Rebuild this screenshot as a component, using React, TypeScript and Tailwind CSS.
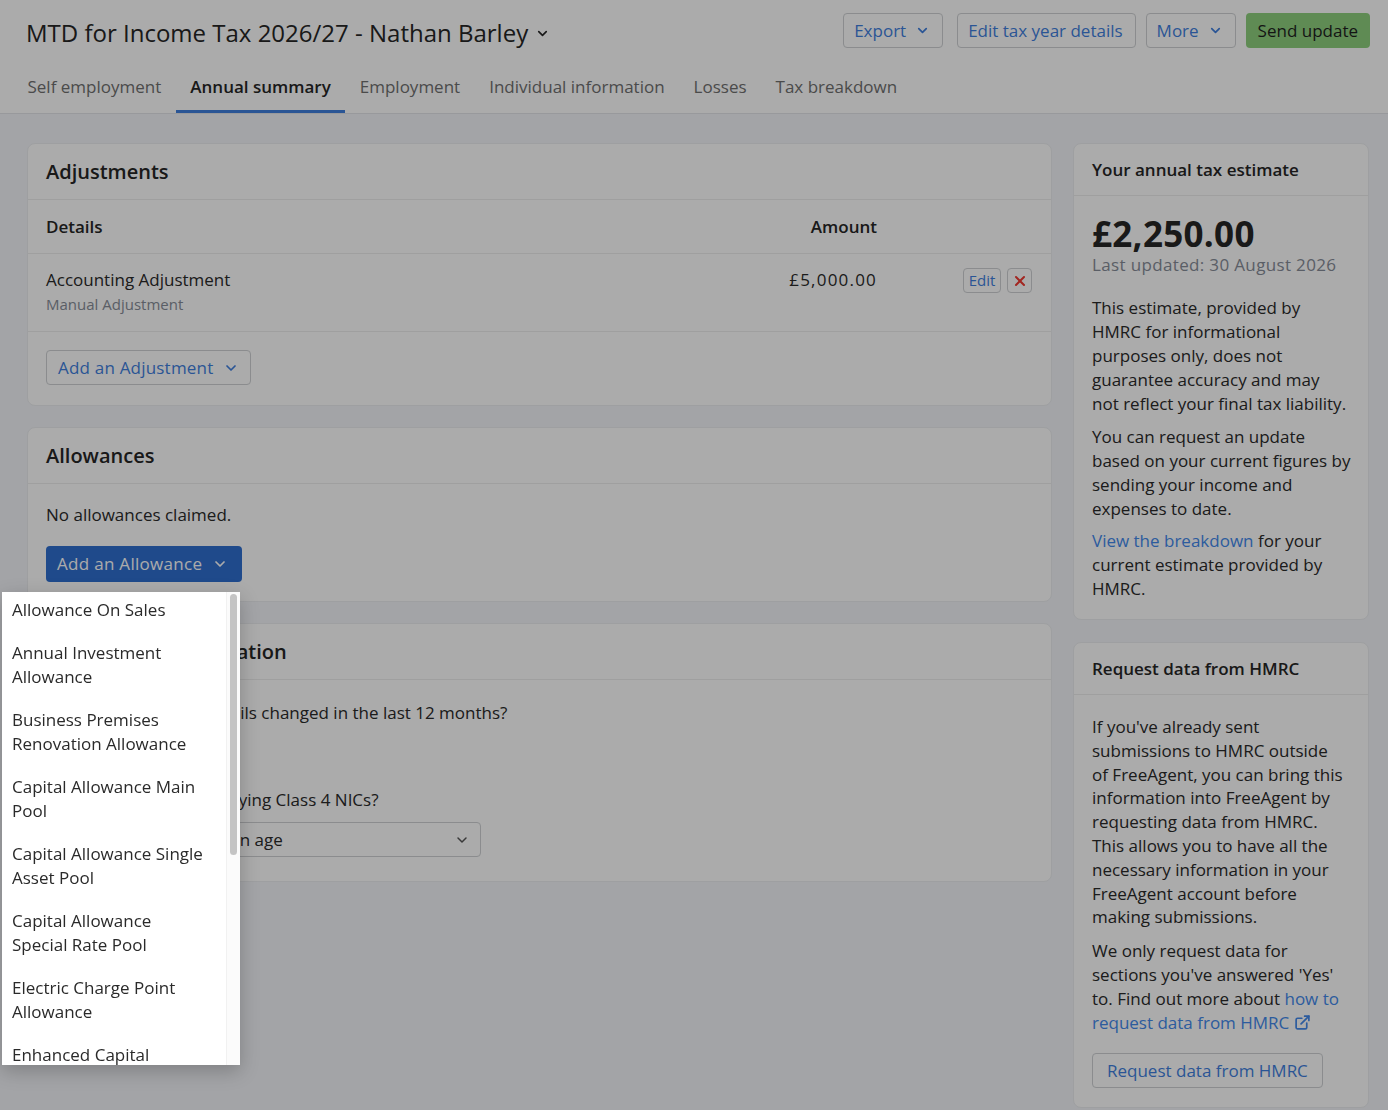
import { ChevronDown, ExternalLink, X } from "lucide-react";

const tabs = [
  "Self employment",
  "Annual summary",
  "Employment",
  "Individual information",
  "Losses",
  "Tax breakdown",
];

const allowanceTypes = [
  "Allowance On Sales",
  "Annual Investment Allowance",
  "Business Premises Renovation Allowance",
  "Capital Allowance Main Pool",
  "Capital Allowance Single Asset Pool",
  "Capital Allowance Special Rate Pool",
  "Electric Charge Point Allowance",
  "Enhanced Capital Allowance",
  "Structures and Buildings Allowance",
  "Zero Emissions Car Allowance",
];

function OutlineButton({ children, chevron }: { children: React.ReactNode; chevron?: boolean }) {
  return (
    <button className="flex h-[35px] items-center gap-[9px] rounded-[4px] border border-[#cfd1d4] bg-white pl-[10px] pr-[12px] text-[17px] font-medium text-[#3f7fde]">
      {children}
      {chevron && <ChevronDown size={15} strokeWidth={2.7} />}
    </button>
  );
}

function Card({ children }: { children: React.ReactNode }) {
  return <section className="rounded-[8px] border border-[#eceef1] bg-white">{children}</section>;
}

function CardTitle({ children, small }: { children: React.ReactNode; small?: boolean }) {
  return small ? (
    <div className="flex h-[52px] items-center border-b border-[#eeeeee] px-[18px] text-[17px] font-semibold text-[#262626]">
      {children}
    </div>
  ) : (
    <div className="flex h-[56px] items-center border-b border-[#eeeeee] px-[18px] text-[20px] font-semibold text-[#262626]">
      {children}
    </div>
  );
}

function AllowanceMenu() {
  return (
    <div className="absolute left-[2px] top-[592px] z-20 flex h-[473px] w-[238px] overflow-hidden bg-white shadow-[0_6px_18px_rgba(0,0,0,0.22)]">
      <ul className="-mt-[3px] flex-1 pl-[10px] pr-[19px]">
        {allowanceTypes.map((t) => (
          <li key={t} className="pb-[10px] pt-[9px] text-[17px] leading-[24px] text-[#2a2a2a]">
            {t}
          </li>
        ))}
      </ul>
      <div className="w-[14px] border-l border-[#f1f1f1] bg-[#fbfbfb]">
        <div className="ml-[3px] mt-[2px] h-[261px] w-[7px] rounded-full bg-[#c4c4c4]" />
      </div>
    </div>
  );
}

export default function App() {
  return (
    <div className="relative min-h-screen bg-[#f3f5f9] font-['Open_Sans',sans-serif] text-[#333333]">
      <header className="border-b border-[#e3e5e9] bg-white">
        <div className="flex items-start justify-between pl-[26px] pr-[18px] pt-[13px]">
          <h1 className="flex h-[40px] items-center gap-[7px] text-[24px] font-medium text-[#262626]">
            MTD for Income Tax 2026/27 - Nathan Barley
            <ChevronDown size={15} strokeWidth={2.6} />
          </h1>
          <div className="flex gap-[10px]">
            <div className="mr-[4px]">
              <OutlineButton chevron>Export</OutlineButton>
            </div>
            <OutlineButton>Edit tax year details</OutlineButton>
            <OutlineButton chevron>More</OutlineButton>
            <button className="h-[35px] rounded-[4px] bg-[#8ecf7e] px-[12px] text-[17px] font-medium text-[#1f1f1f]">
              Send update
            </button>
          </div>
        </div>
        <nav className="mt-[13px] flex pl-[13px]">
          {tabs.map((t) => {
            const active = t === "Annual summary";
            return (
              <div
                key={t}
                className={
                  active
                    ? "border-b-[3px] border-[#3f7fde] px-[14.5px] pb-[11px] pt-[9px] text-[17px] font-semibold leading-[24px] text-[#262626]"
                    : "border-b-[3px] border-transparent px-[14.5px] pb-[11px] pt-[9px] text-[17px] leading-[24px] text-[#707070]"
                }
              >
                {t}
              </div>
            );
          })}
        </nav>
      </header>

      <main className="grid grid-cols-[1fr_296px] items-start gap-[21px] pb-[2px] pl-[27px] pr-[19px] pt-[29px]">
        <div className="flex flex-col gap-[21px]">
          <Card>
            <CardTitle>Adjustments</CardTitle>
            <div className="flex h-[54px] items-center border-b border-[#eeeeee] px-[18px] text-[17px] font-semibold text-[#262626]">
              <div className="flex-1">Details</div>
              <div className="text-right">Amount</div>
              <div className="w-[156px]" />
            </div>
            <div className="flex h-[78px] items-start border-b border-[#eeeeee] px-[18px] pt-[14px]">
              <div className="flex-1">
                <div className="text-[17px] leading-[24px] text-[#2a2a2a]">Accounting Adjustment</div>
                <div className="mt-[1px] text-[15px] leading-[22px] text-[#878d98]">Manual Adjustment</div>
              </div>
              <div className="text-right text-[17px] leading-[24px] tracking-[1.2px] text-[#2a2a2a]">£5,000.00</div>
              <div className="flex w-[156px] justify-end gap-[6px] pr-[1px]">
                <button className="flex h-[25px] w-[38px] items-center justify-center rounded-[4px] border border-[#cfd1d4] text-[15px] font-medium text-[#3f7fde]">
                  Edit
                </button>
                <button className="flex h-[25px] w-[25px] items-center justify-center rounded-[4px] border border-[#cfd1d4] text-[#f23a32]">
                  <X size={16} strokeWidth={3} />
                </button>
              </div>
            </div>
            <div className="h-[73px] px-[18px] pt-[18px]">
              <button className="flex h-[35px] items-center gap-[10px] rounded-[4px] border border-[#cfd1d4] pl-[11px] pr-[11px] text-[17px] font-medium tracking-[0.2px] text-[#3f7fde]">
                Add an Adjustment
                <ChevronDown size={16} strokeWidth={2.6} />
              </button>
            </div>
          </Card>

          <Card>
            <CardTitle>Allowances</CardTitle>
            <div className="px-[18px] pb-[19px] pt-[19px]">
              <p className="text-[17px] leading-[24px] text-[#2a2a2a]">No allowances claimed.</p>
              <button className="mt-[19px] flex h-[36px] items-center gap-[10px] rounded-[4px] bg-[#2f6fd0] pl-[11px] pr-[14px] text-[17px] font-medium tracking-[0.3px] text-white">
                Add an Allowance
                <ChevronDown size={16} strokeWidth={2.6} />
              </button>
            </div>
          </Card>

          <Card>
            <CardTitle>Personal tax information</CardTitle>
            <div className="px-[18px] pb-[24px] pt-[21px] text-[17px] leading-[24px] text-[#2a2a2a]">
              <p>Have your personal details changed in the last 12 months?</p>
              <div className="mb-[21px] mt-[10px] flex h-[32px] items-center gap-[24px]">
                <label className="flex items-center gap-[8px]">
                  <span className="h-[18px] w-[18px] rounded-full border border-[#9a9ea5]" />
                  Yes
                </label>
                <label className="flex items-center gap-[8px]">
                  <span className="flex h-[18px] w-[18px] items-center justify-center rounded-full border border-[#3f7fde]">
                    <span className="h-[10px] w-[10px] rounded-full bg-[#3f7fde]" />
                  </span>
                  No
                </label>
              </div>
              <p>Are you exempt from paying Class 4 NICs?</p>
              <div className="mt-[10px] flex h-[35px] w-[435px] items-center justify-between rounded-[4px] border border-[#cfd1d4] pl-[12px] pr-[10px]">
                <span>No, under state pension age</span>
                <ChevronDown size={16} strokeWidth={2.2} className="text-[#555555]" />
              </div>
            </div>
          </Card>
        </div>

        <div className="flex flex-col gap-[22px]">
          <Card>
            <div className="flex h-[52px] items-center border-b border-[#eeeeee] px-[18px] text-[17px] font-semibold text-[#262626]">
              Your annual tax estimate
            </div>
            <div className="pb-[18px] pl-[18px] pr-[16px] pt-[18px] text-[17px] leading-[24px] text-[#2a2a2a]">
              <div className="text-[35px] font-bold leading-[40px] tracking-[0.3px] text-[#262626]">£2,250.00</div>
              <div className="-mt-[1px] tracking-[0.35px] text-[#878d98]">Last updated: 30 August 2026</div>
              <p className="mt-[19px]">
                This estimate, provided by HMRC for informational purposes only, does not guarantee accuracy and may
                not{"\u00a0"}reflect your final tax liability.
              </p>
              <p className="mt-[9px]">
                You can request an update based on your current figures by sending your income and expenses to date.
              </p>
              <p className="mt-[8px]">
                <a className="text-[#4389ec]">View the breakdown</a> for your current estimate provided by HMRC.
              </p>
            </div>
          </Card>

          <Card>
            <CardTitle small>Request data from HMRC</CardTitle>
            <div className="pb-[19px] pl-[18px] pr-[22px] pt-[20px] text-[17px] leading-[23.8px] text-[#2a2a2a]">
              <p>
                If you've already sent submissions to HMRC outside of FreeAgent, you can bring this information into
                FreeAgent by requesting data from HMRC. This allows you to have all the necessary information in your
                FreeAgent account before making submissions.
              </p>
              <p className="mt-[10px]">
                We only request data for sections you've answered 'Yes' to. Find out more about{" "}
                <a className="text-[#4389ec]">
                  how to request data from HMRC{" "}
                  <ExternalLink size={17} strokeWidth={2.4} className="inline -mt-[4px]" />
                </a>
              </p>
              <button className="mt-[19px] flex h-[35px] items-center rounded-[4px] border border-[#cfd1d4] px-[14px] text-[17px] font-medium text-[#3f7fde]">
                Request data from HMRC
              </button>
            </div>
          </Card>
        </div>
      </main>

      {/* backdrop shown while the allowance menu is open */}
      <div className="fixed inset-0 z-10 bg-black/[0.33]" />
      <AllowanceMenu />
    </div>
  );
}
